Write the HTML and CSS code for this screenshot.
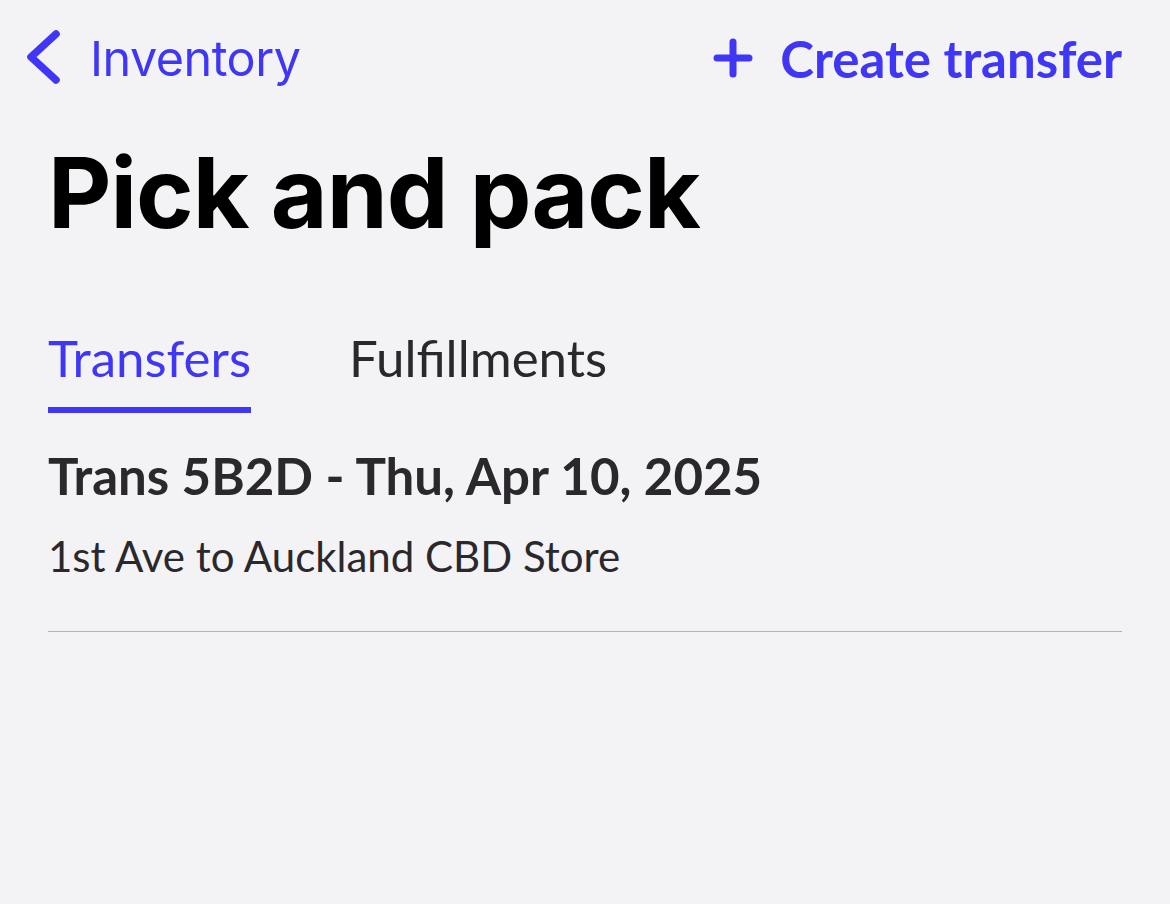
FILE: index.html
```html
<!DOCTYPE html>
<html>
<head>
<meta charset="utf-8">
<link rel="stylesheet" href="styles.css">
</head>
<body>
<div class="page">
  <header class="nav">
    <a class="back">
      <svg class="chev" width="40" height="60" viewBox="0 0 40 60"><path d="M32 6 L7 29 L32 52" fill="none" stroke="#3f37f5" stroke-width="7.5" stroke-linecap="round" stroke-linejoin="round"/></svg>
      <span class="back-label">Inventory</span>
    </a>
    <a class="create">
      <svg class="plus" width="40" height="40" viewBox="0 0 40 40"><path d="M20 4 V36 M4 20 H36" stroke="#3f37f5" stroke-width="7" stroke-linecap="round"/></svg>
      <span>Create transfer</span>
    </a>
  </header>
  <h1 class="title">Pick and pack</h1>
  <nav class="tabs">
    <div class="tab active">Transfers</div>
    <div class="tab">Fulfillments</div>
  </nav>
  <div class="item">
    <div class="item-title">Trans 5B2D - Thu, Apr 10, 2025</div>
    <div class="item-sub">1st Ave to Auckland CBD Store</div>
  </div>
</div>
</body>
</html>
```

FILE: styles.css
```css
html, body {
  margin: 0;
  padding: 0;
  background: #f3f2f5;
}
body {
  font-family: "Lato", "Liberation Sans", sans-serif;
  color: #2a282c;
}
.page {
  padding: 0 48px;
}
.nav {
  display: flex;
  justify-content: space-between;
  align-items: center;
  height: 116px;
}
.back {
  display: flex;
  align-items: center;
  margin-left: -24px;
  color: #3f37f5;
}
.chev {
  display: block;
}
.back-label {
  font-family: "Inter", sans-serif;
  font-size: 48.5px;
  margin-left: 26px;
  letter-spacing: -0.5px;
}
.create {
  display: flex;
  align-items: center;
  color: #3f37f5;
  font-weight: 700;
  font-size: 51px;
}
.plus {
  display: block;
  margin-right: 27px;
}
.title {
  margin: 0;
  font-family: "Inter", sans-serif;
  font-weight: 700;
  font-size: 98px;
  color: #000;
  line-height: 1;
  letter-spacing: -1px;
  padding-top: 28px;
}
.tabs {
  display: flex;
  gap: 98px;
  margin-top: 90px;
}
.tab {
  font-size: 51px;
  line-height: 1;
  padding-bottom: 24px;
  border-bottom: 6px solid transparent;
}
.tab.active {
  color: #3f37f5;
  border-bottom-color: #3f37f5;
}
.item {
  padding-top: 32px;
  padding-bottom: 49px;
  border-bottom: 1.5px solid #b4b3b6;
}
.item-title {
  font-weight: 700;
  font-size: 51px;
  line-height: 1.2;
}
.item-sub {
  font-size: 42px;
  line-height: 1.2;
  margin-top: 25px;
}
```
